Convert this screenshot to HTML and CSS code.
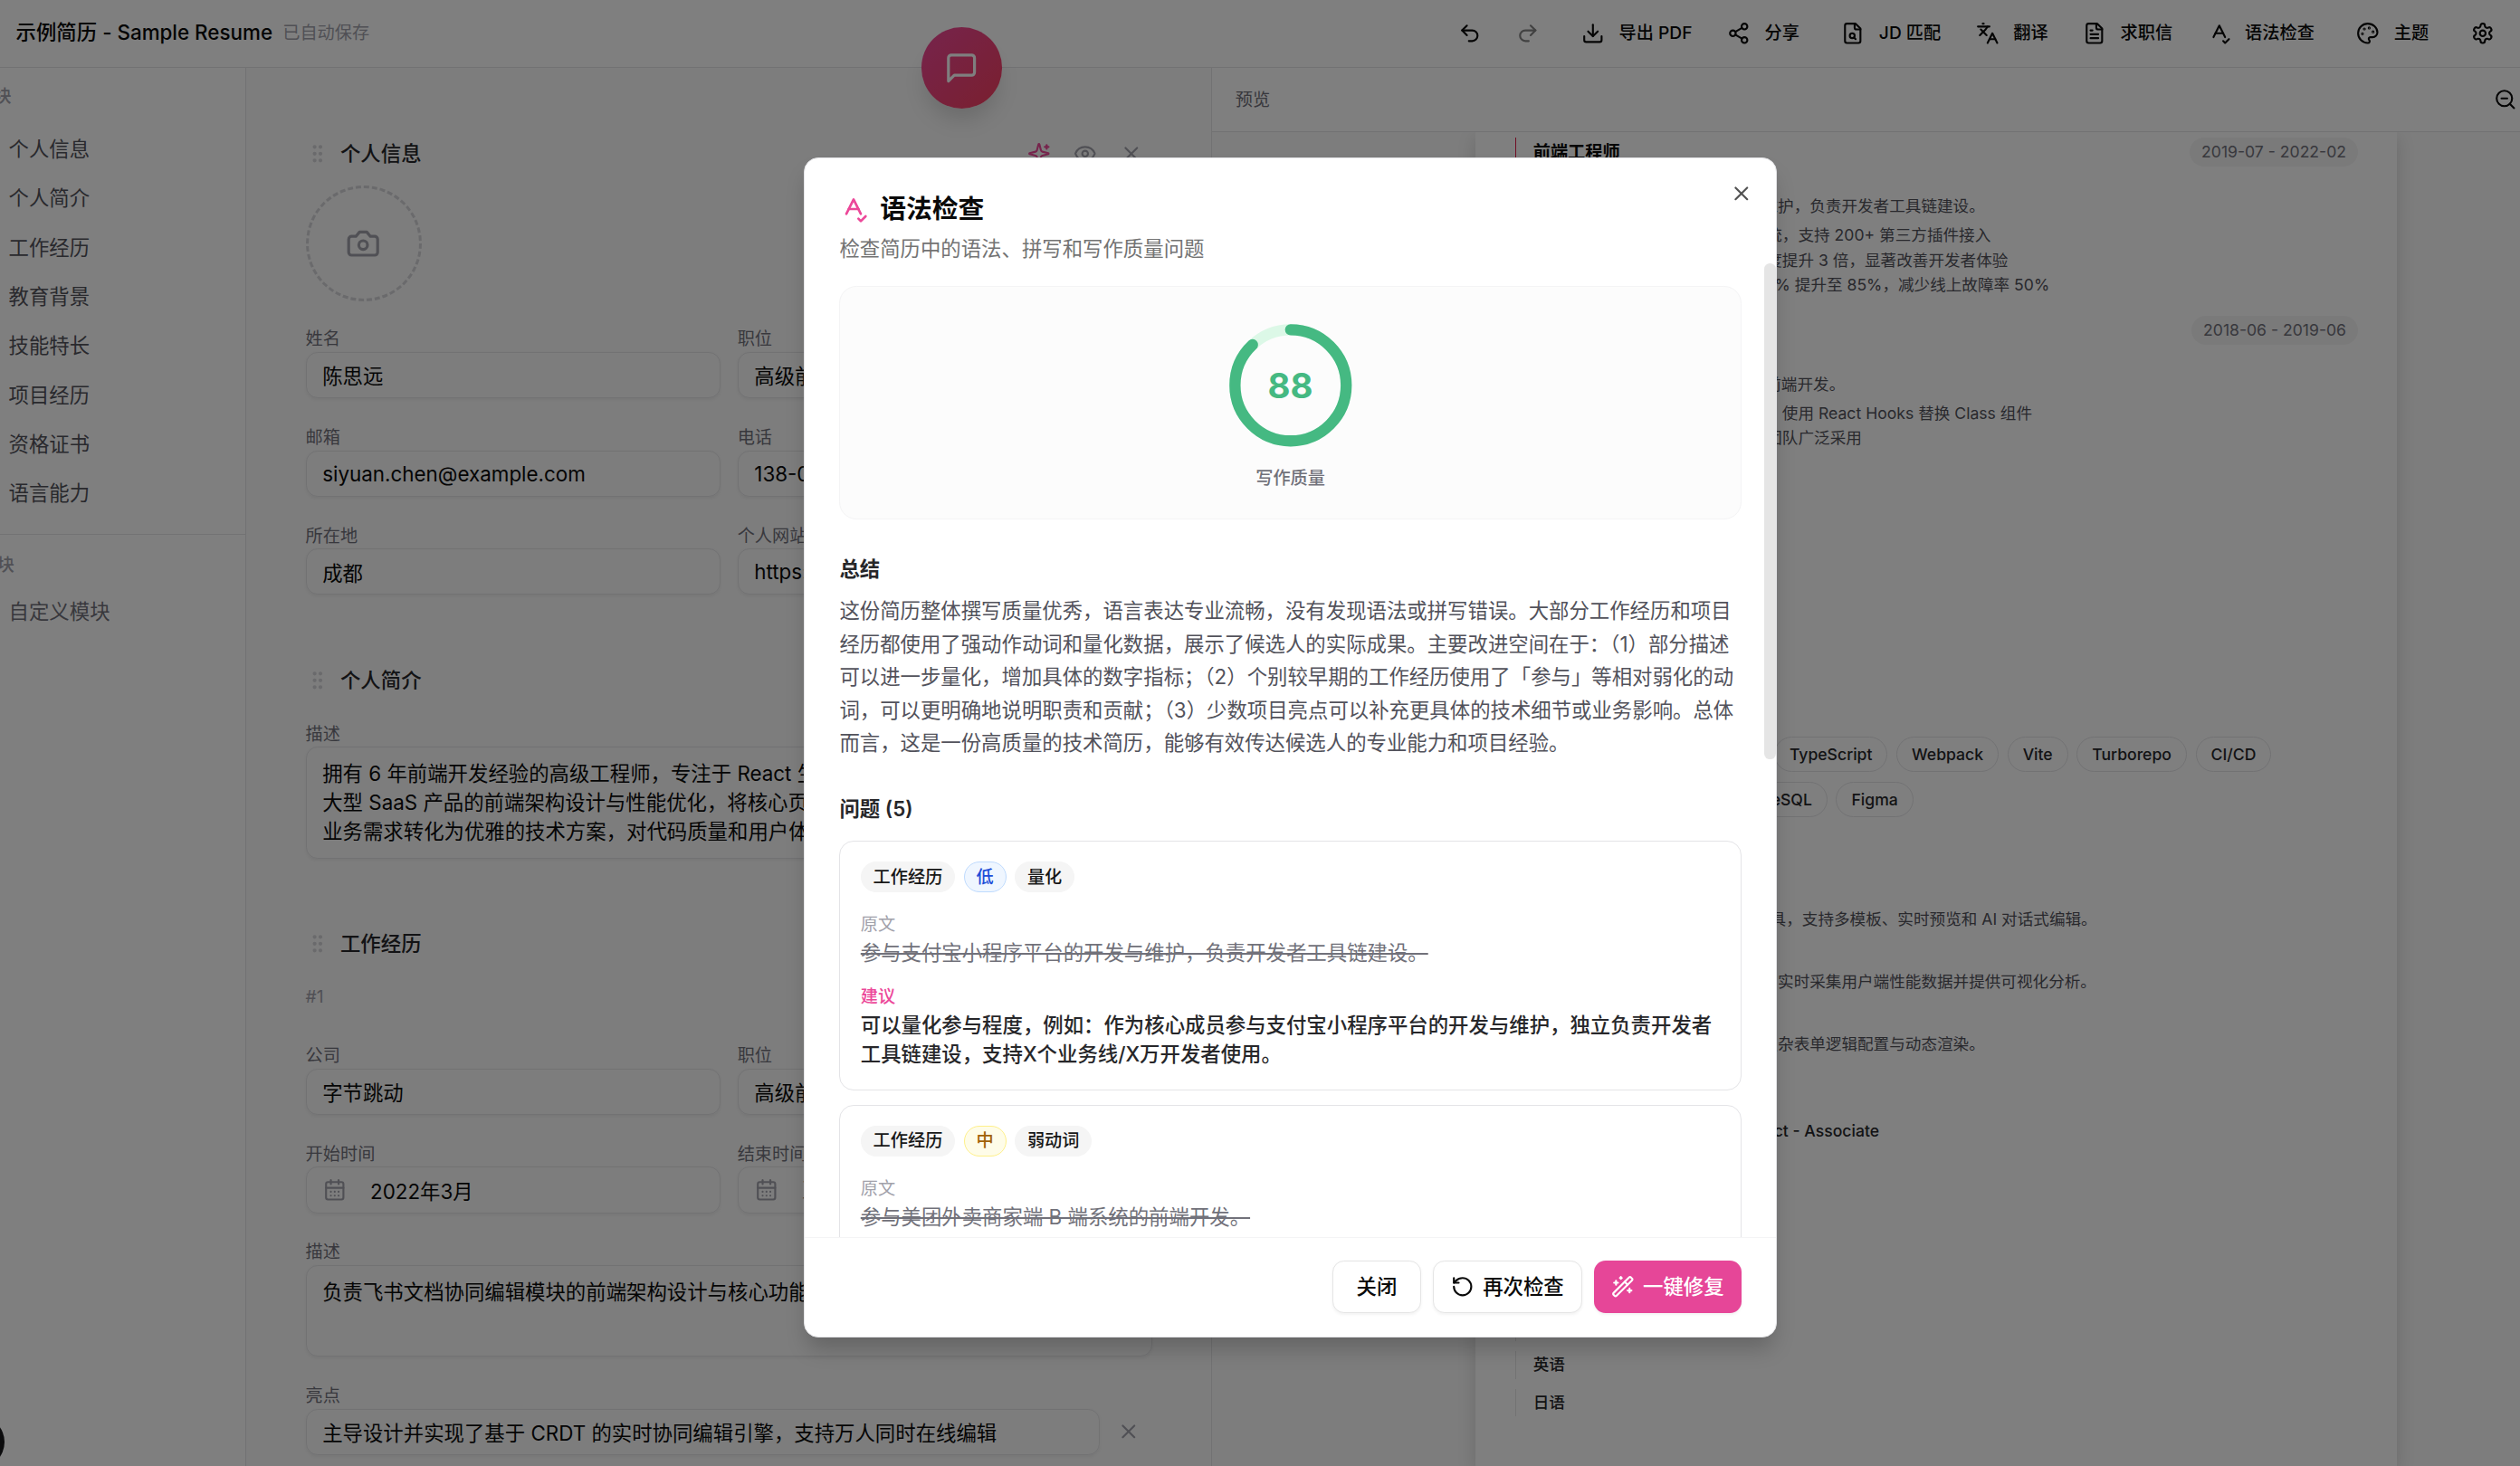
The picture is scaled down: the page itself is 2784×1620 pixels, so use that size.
FILE: index.html
```html
<!DOCTYPE html>
<html lang="zh-CN">
<head>
    <meta charset="UTF-8">
    <meta name="viewport" content="width=device-width, initial-scale=1.0">
    <title>示例简历 - Sample Resume</title>
    <link rel="stylesheet" href="styles.css">
</head>
<body>

    <!-- icon set -->
    <svg class="sprite" aria-hidden="true">
        <symbol id="i-undo" viewBox="0 0 24 24"><path d="M9 14 4 9l5-5"/><path d="M4 9h10.5a5.5 5.5 0 0 1 0 11H11"/></symbol>
        <symbol id="i-redo" viewBox="0 0 24 24"><path d="m15 14 5-5-5-5"/><path d="M20 9H9.5a5.5 5.5 0 0 0 0 11H13"/></symbol>
        <symbol id="i-download" viewBox="0 0 24 24"><path d="M12 15V3"/><path d="M21 15v4a2 2 0 0 1-2 2H5a2 2 0 0 1-2-2v-4"/><path d="m7 10 5 5 5-5"/></symbol>
        <symbol id="i-share" viewBox="0 0 24 24"><circle cx="18" cy="5" r="3"/><circle cx="6" cy="12" r="3"/><circle cx="18" cy="19" r="3"/><path d="m8.59 13.51 6.83 3.98"/><path d="m15.41 6.51-6.82 3.98"/></symbol>
        <symbol id="i-file-search" viewBox="0 0 24 24"><path d="M15 2H6a2 2 0 0 0-2 2v16a2 2 0 0 0 2 2h12a2 2 0 0 0 2-2V7Z"/><path d="M14 2v4a2 2 0 0 0 2 2h4"/><circle cx="11.5" cy="14.5" r="2.5"/><path d="M13.3 16.3 15 18"/></symbol>
        <symbol id="i-languages" viewBox="0 0 24 24"><path d="m5 8 6 6"/><path d="m4 14 6-6 2-3"/><path d="M2 5h12"/><path d="M7 2h1"/><path d="m22 22-5-10-5 10"/><path d="M14 18h6"/></symbol>
        <symbol id="i-file-text" viewBox="0 0 24 24"><path d="M15 2H6a2 2 0 0 0-2 2v16a2 2 0 0 0 2 2h12a2 2 0 0 0 2-2V7Z"/><path d="M14 2v4a2 2 0 0 0 2 2h4"/><path d="M10 9H8"/><path d="M16 13H8"/><path d="M16 17H8"/></symbol>
        <symbol id="i-spell" viewBox="0 0 24 24"><path d="m6 16 6-12 6 12"/><path d="M8 12h8"/><path d="m16 20 2 2 4-4"/></symbol>
        <symbol id="i-palette" viewBox="0 0 24 24"><path d="M12 22a1 1 0 0 1 0-20 10 9 0 0 1 10 9 5 5 0 0 1-5 5h-2.25a1.75 1.75 0 0 0-1.4 2.8l.3.4a1.75 1.75 0 0 1-1.4 2.8z"/><circle cx="13.5" cy="6.5" r=".5"/><circle cx="17.5" cy="10.5" r=".5"/><circle cx="6.5" cy="12.5" r=".5"/><circle cx="8.5" cy="7.5" r=".5"/></symbol>
        <symbol id="i-settings" viewBox="0 0 24 24"><path d="M12.22 2h-.44a2 2 0 0 0-2 2v.18a2 2 0 0 1-1 1.73l-.43.25a2 2 0 0 1-2 0l-.15-.08a2 2 0 0 0-2.73.73l-.22.38a2 2 0 0 0 .73 2.73l.15.1a2 2 0 0 1 1 1.72v.51a2 2 0 0 1-1 1.74l-.15.09a2 2 0 0 0-.73 2.73l.22.38a2 2 0 0 0 2.73.73l.15-.08a2 2 0 0 1 2 0l.43.25a2 2 0 0 1 1 1.73V20a2 2 0 0 0 2 2h.44a2 2 0 0 0 2-2v-.18a2 2 0 0 1 1-1.73l.43-.25a2 2 0 0 1 2 0l.15.08a2 2 0 0 0 2.73-.73l.22-.39a2 2 0 0 0-.73-2.73l-.15-.08a2 2 0 0 1-1-1.74v-.5a2 2 0 0 1 1-1.74l.15-.09a2 2 0 0 0 .73-2.73l-.22-.38a2 2 0 0 0-2.73-.73l-.15.08a2 2 0 0 1-2 0l-.43-.25a2 2 0 0 1-1-1.73V4a2 2 0 0 0-2-2z"/><circle cx="12" cy="12" r="3"/></symbol>
        <symbol id="i-zoom-out" viewBox="0 0 24 24"><circle cx="11" cy="11" r="8"/><path d="m21 21-4.35-4.35"/><path d="M8 11h6"/></symbol>
        <symbol id="i-x" viewBox="0 0 24 24"><path d="M18 6 6 18"/><path d="m6 6 12 12"/></symbol>
        <symbol id="i-eye" viewBox="0 0 24 24"><path d="M2.06 12.35a1 1 0 0 1 0-.7 10.75 10.75 0 0 1 19.88 0 1 1 0 0 1 0 .7 10.75 10.75 0 0 1-19.88 0"/><circle cx="12" cy="12" r="3"/></symbol>
        <symbol id="i-sparkles" viewBox="0 0 24 24"><path d="M9.94 15.5A2 2 0 0 0 8.5 14.06l-6.14-1.58a.5.5 0 0 1 0-.96L8.5 9.94A2 2 0 0 0 9.94 8.5l1.58-6.14a.5.5 0 0 1 .96 0l1.58 6.14a2 2 0 0 0 1.44 1.44l6.14 1.58a.5.5 0 0 1 0 .96l-6.14 1.58a2 2 0 0 0-1.44 1.44l-1.58 6.14a.5.5 0 0 1-.96 0z"/><path d="M20 3v4"/><path d="M22 5h-4"/><path d="M4 17v2"/><path d="M5 18H3"/></symbol>
        <symbol id="i-message" viewBox="0 0 24 24"><path d="M21 15a2 2 0 0 1-2 2H7l-4 4V5a2 2 0 0 1 2-2h14a2 2 0 0 1 2 2z"/></symbol>
        <symbol id="i-camera" viewBox="0 0 24 24"><path d="M14.5 4h-5L7 7H4a2 2 0 0 0-2 2v9a2 2 0 0 0 2 2h16a2 2 0 0 0 2-2V9a2 2 0 0 0-2-2h-3l-2.5-3z"/><circle cx="12" cy="13" r="3"/></symbol>
        <symbol id="i-grip" viewBox="0 0 24 24"><circle cx="9" cy="12" r="1"/><circle cx="9" cy="5" r="1"/><circle cx="9" cy="19" r="1"/><circle cx="15" cy="12" r="1"/><circle cx="15" cy="5" r="1"/><circle cx="15" cy="19" r="1"/></symbol>
        <symbol id="i-calendar" viewBox="0 0 24 24"><path d="M8 2v4"/><path d="M16 2v4"/><rect width="18" height="18" x="3" y="4" rx="2"/><path d="M3 10h18"/><path d="M8 14h.01M12 14h.01M16 14h.01M8 18h.01M12 18h.01M16 18h.01"/></symbol>
        <symbol id="i-rotate" viewBox="0 0 24 24"><path d="M3 12a9 9 0 1 0 9-9 9.75 9.75 0 0 0-6.74 2.74L3 8"/><path d="M3 3v5h5"/></symbol>
        <symbol id="i-wand" viewBox="0 0 24 24"><path d="m21.64 3.64-1.28-1.28a1.21 1.21 0 0 0-1.72 0L2.36 18.64a1.21 1.21 0 0 0 0 1.72l1.28 1.28a1.2 1.2 0 0 0 1.72 0L21.64 5.36a1.2 1.2 0 0 0 0-1.72"/><path d="m14 7 3 3"/><path d="M5 6v4"/><path d="M19 14v4"/><path d="M10 2v2"/><path d="M7 8H3"/><path d="M21 16h-4"/><path d="M11 3H9"/></symbol>
    </svg>

    <div class="app">
        <header class="topbar">
            <h1>示例简历 - Sample Resume</h1>
            <span class="saved">已自动保存</span>
            <div class="tools">
                <div class="group">
                    <button class="tool square" type="button" aria-label="撤销"><svg class="icon"><use href="#i-undo"/></svg></button>
                    <button class="tool square" type="button" aria-label="重做" disabled><svg class="icon"><use href="#i-redo"/></svg></button>
                </div>
                <div class="group">
                    <button class="tool" type="button"><svg class="icon"><use href="#i-download"/></svg>导出 PDF</button>
                    <button class="tool" type="button"><svg class="icon"><use href="#i-share"/></svg>分享</button>
                </div>
                <div class="group">
                    <button class="tool" type="button"><svg class="icon"><use href="#i-file-search"/></svg>JD 匹配</button>
                    <button class="tool" type="button"><svg class="icon"><use href="#i-languages"/></svg>翻译</button>
                    <button class="tool" type="button"><svg class="icon"><use href="#i-file-text"/></svg>求职信</button>
                    <button class="tool" type="button"><svg class="icon"><use href="#i-spell"/></svg>语法检查</button>
                </div>
                <button class="tool" type="button"><svg class="icon"><use href="#i-palette"/></svg>主题</button>
                <button class="tool square" type="button" aria-label="设置"><svg class="icon"><use href="#i-settings"/></svg></button>
            </div>
        </header>

        <div class="workspace">
            <nav class="sidebar">
                <h2>块</h2>
                <ul>
                    <li><a href="#personal">个人信息</a></li>
                    <li><a href="#summary">个人简介</a></li>
                    <li><a href="#work">工作经历</a></li>
                    <li><a href="#education">教育背景</a></li>
                    <li><a href="#skills">技能特长</a></li>
                    <li><a href="#projects">项目经历</a></li>
                    <li><a href="#certs">资格证书</a></li>
                    <li><a href="#languages">语言能力</a></li>
                </ul>
                <div class="add-block">
                    <h2>块</h2>
                    <button type="button">自定义模块</button>
                </div>
            </nav>

            <main class="editor">
                <section id="personal">
                    <div class="section-head compact">
                        <svg class="icon grip"><use href="#i-grip"/></svg>
                        <h3>个人信息</h3>
                        <button class="mini pink" type="button" aria-label="AI 优化"><svg class="icon"><use href="#i-sparkles"/></svg></button>
                        <button class="mini" type="button" aria-label="隐藏"><svg class="icon"><use href="#i-eye"/></svg></button>
                        <button class="mini" type="button" aria-label="删除"><svg class="icon"><use href="#i-x"/></svg></button>
                    </div>
                    <button class="avatar" type="button" aria-label="上传头像"><svg><use href="#i-camera"/></svg></button>
                    <div class="fields">
                        <div class="field"><label for="name">姓名</label><input id="name" type="text" value="陈思远"></div>
                        <div class="field"><label for="title">职位</label><input id="title" type="text" value="高级前端工程师"></div>
                        <div class="field"><label for="email">邮箱</label><input id="email" type="text" value="siyuan.chen@example.com"></div>
                        <div class="field"><label for="phone">电话</label><input id="phone" type="text" value="138-0000-0000"></div>
                        <div class="field"><label for="city">所在地</label><input id="city" type="text" value="成都"></div>
                        <div class="field"><label for="site">个人网站</label><input id="site" type="text" value="https://example.com"></div>
                    </div>
                </section>

                <section id="summary">
                    <div class="section-head">
                        <svg class="icon grip"><use href="#i-grip"/></svg>
                        <h3>个人简介</h3>
                    </div>
                    <div class="field">
                        <label for="about">描述</label>
                        <textarea id="about" class="tall">拥有 6 年前端开发经验的高级工程师，专注于 React 生态与工程化建设。主导过
大型 SaaS 产品的前端架构设计与性能优化，将核心页面加载速度提升。善于将
业务需求转化为优雅的技术方案，对代码质量和用户体验有着极高的追求。</textarea>
                    </div>
                </section>

                <section id="work">
                    <div class="section-head">
                        <svg class="icon grip"><use href="#i-grip"/></svg>
                        <h3>工作经历</h3>
                    </div>
                    <p class="entry-no">#1</p>
                    <div class="fields">
                        <div class="field"><label for="company">公司</label><input id="company" type="text" value="字节跳动"></div>
                        <div class="field"><label for="position">职位</label><input id="position" type="text" value="高级前端工程师"></div>
                        <div class="field">
                            <label for="start">开始时间</label>
                            <div class="date"><svg class="icon"><use href="#i-calendar"/></svg><input id="start" type="text" value="2022年3月"></div>
                        </div>
                        <div class="field">
                            <label for="end">结束时间</label>
                            <div class="date"><svg class="icon"><use href="#i-calendar"/></svg><input id="end" type="text" placeholder="至今"></div>
                        </div>
                        <div class="field wide"><label for="duty">描述</label><textarea id="duty">负责飞书文档协同编辑模块的前端架构设计与核心功能开发。</textarea></div>
                        <div class="field wide">
                            <label for="highlight">亮点</label>
                            <div class="removable">
                                <input id="highlight" type="text" value="主导设计并实现了基于 CRDT 的实时协同编辑引擎，支持万人同时在线编辑">
                                <button class="remove" type="button" aria-label="删除亮点"><svg class="icon"><use href="#i-x"/></svg></button>
                            </div>
                        </div>
                    </div>
                </section>
            </main>

            <aside class="preview">
                <div class="preview-bar">
                    <span>预览</span>
                    <button type="button" aria-label="缩小"><svg class="icon"><use href="#i-zoom-out"/></svg></button>
                </div>
                <div class="canvas">
                    <article class="paper">
                        <div class="entry current">
                            <div class="entry-row"><h4>前端工程师</h4><span class="period">2019-07 - 2022-02</span></div>
                            <p class="org">蚂蚁集团</p>
                            <p>参与支付宝小程序平台的开发与维护，负责开发者工具链建设。</p>
                            <ul>
                                <li>主导设计小程序插件化架构系统，支持 200+ 第三方插件接入</li>
                                <li>重构包体构建流程，使编译速度提升 3 倍，显著改善开发者体验</li>
                                <li>推动核心单元测试覆盖率从 30% 提升至 85%，减少线上故障率 50%</li>
                            </ul>
                        </div>
                        <div class="entry">
                            <div class="entry-row"><h4>前端工程师</h4><span class="period">2018-06 - 2019-06</span></div>
                            <p class="org">美团</p>
                            <p>参与美团外卖商家端 B 端系统的前端开发。</p>
                            <ul>
                                <li>完成商家后台核心页面的重构，使用 React Hooks 替换 Class 组件</li>
                                <li>封装通用组件库，被多个业务团队广泛采用</li>
                            </ul>
                        </div>

                        <h5>教育背景</h5>
                        <div class="list">
                            <div class="entry"><h4>硕士</h4><p>计算机科学与技术</p><p>GPA 3.8</p></div>
                            <div class="entry"><h4>学士</h4><p>软件工程</p><p>GPA 3.7</p></div>
                        </div>

                        <h5>技能特长</h5>
                        <div class="chips">
                            <span>React</span><span>Next.js</span><span>Vue 3</span><span>TypeScript</span><span>Webpack</span><span>Vite</span><span>Turborepo</span><span>CI/CD</span>
                        </div>
                        <div class="chips">
                            <span>Node.js</span><span>Docker</span><span>PostgreSQL</span><span>Figma</span>
                        </div>

                        <h5>项目经历</h5>
                        <div class="list">
                            <div class="entry"><h4>AI 简历</h4><p>面向求职者的在线 AI 简历编辑工具，支持多模板、实时预览和 AI 对话式编辑。</p></div>
                            <div class="entry"><h4>性能监控</h4><p>轻量级的前端性能监控平台产品，实时采集用户端性能数据并提供可视化分析。</p></div>
                            <div class="entry"><h4>表单引擎</h4><p>可视化拖拽表单搭建引擎，支持复杂表单逻辑配置与动态渲染。</p></div>
                        </div>

                        <h5>资格证书</h5>
                        <div class="list certs">
                            <div class="entry"><h4>AWS Certified Solutions Architect - Associate</h4><p>AWS</p></div>
                            <div class="entry"><h4>CKA</h4><p>CNCF</p></div>
                        </div>

                        <h5>语言能力</h5>
                        <div class="list langs">
                            <div class="entry">中文</div>
                            <div class="entry">英语</div>
                            <div class="entry">日语</div>
                        </div>
                    </article>
                </div>
            </aside>
        </div>

        <button class="chat-fab" type="button" aria-label="AI 对话"><svg><use href="#i-message"/></svg></button>
        <span class="dev-badge"></span>
    </div>

    <div class="overlay">
        <div class="modal" role="dialog" aria-labelledby="dialogTitle">
            <div class="modal-head">
                <h2 id="dialogTitle"><svg><use href="#i-spell"/></svg>语法检查</h2>
                <p>检查简历中的语法、拼写和写作质量问题</p>
            </div>
            <button class="close" type="button" aria-label="关闭"><svg class="icon"><use href="#i-x"/></svg></button>

            <div class="modal-body">
                <div class="score-card">
                    <div class="ring">
                        <svg viewBox="0 0 100 100">
                            <circle class="track" cx="50" cy="50" r="40"/>
                            <circle class="value" cx="50" cy="50" r="40" pathLength="100" stroke-dasharray="88 100"/>
                        </svg>
                        <strong>88</strong>
                    </div>
                    <p>写作质量</p>
                </div>

                <h3>总结</h3>
                <p class="summary">这份简历整体撰写质量优秀，语言表达专业流畅，没有发现语法或拼写错误。大部分工作经历和项目经历都使用了强动作动词和量化数据，展示了候选人的实际成果。主要改进空间在于：（1）部分描述可以进一步量化，增加具体的数字指标；（2）个别较早期的工作经历使用了「参与」等相对弱化的动词，可以更明确地说明职责和贡献；（3）少数项目亮点可以补充更具体的技术细节或业务影响。总体而言，这是一份高质量的技术简历，能够有效传达候选人的专业能力和项目经验。</p>

                <h3 class="issues-title">问题 (5)</h3>
                <div class="issue">
                    <div class="tags"><span class="tag">工作经历</span><span class="tag low">低</span><span class="tag">量化</span></div>
                    <p class="caption">原文</p>
                    <p class="original">参与支付宝小程序平台的开发与维护，负责开发者工具链建设。</p>
                    <p class="caption advice">建议</p>
                    <p class="suggestion">可以量化参与程度，例如：作为核心成员参与支付宝小程序平台的开发与维护，独立负责开发者工具链建设，支持X个业务线/X万开发者使用。</p>
                </div>
                <div class="issue">
                    <div class="tags"><span class="tag">工作经历</span><span class="tag mid">中</span><span class="tag">弱动词</span></div>
                    <p class="caption">原文</p>
                    <p class="original">参与美团外卖商家端 B 端系统的前端开发。</p>
                </div>
                <span class="scroll-thumb"></span>
            </div>

            <div class="modal-foot">
                <button class="btn" type="button">关闭</button>
                <button class="btn with-icon" type="button"><svg class="icon"><use href="#i-rotate"/></svg>再次检查</button>
                <button class="btn with-icon primary" type="button"><svg class="icon"><use href="#i-wand"/></svg>一键修复</button>
            </div>
        </div>
    </div>

</body>
</html>
```
FILE: styles.css
```css
* {
    box-sizing: border-box;
    margin: 0;
    padding: 0;
}
html {
    height: 100%;
    zoom: 1.6;
}
body {
    height: 100%;
    overflow: hidden;
    font-family: Inter, "Noto Sans CJK SC", sans-serif;
    font-size: 14px;
    line-height: 20px;
    color: #0a0a0a;
    background: #fff;
}
button, input, textarea {
    font: inherit;
    color: inherit;
}
button {
    background: none;
    border: none;
    cursor: pointer;
}
ul {
    list-style: none;
}
a {
    color: inherit;
    text-decoration: none;
}
svg {
    fill: none;
    stroke: currentColor;
    stroke-width: 2;
    stroke-linecap: round;
    stroke-linejoin: round;
    flex-shrink: 0;
}
.sprite {
    position: absolute;
    width: 0;
    height: 0;
}
.icon {
    width: 16px;
    height: 16px;
}

/* top bar */
.app {
    position: relative;
    height: 100%;
    display: flex;
    flex-direction: column;
    overflow: hidden;
}
.topbar {
    display: flex;
    align-items: center;
    height: 47px;
    padding: 0 8px 1px 11px;
    border-bottom: 1px solid #e4e4e7;
    flex-shrink: 0;
}
.topbar h1 {
    font-size: 14px;
    font-weight: 500;
}
.saved {
    margin-left: 7px;
    font-size: 12px;
    color: #a1a1aa;
}
.tools {
    display: flex;
    gap: 9px;
    margin-left: auto;
}
.group {
    display: flex;
    gap: 4px;
}
.tool {
    display: flex;
    align-items: center;
    justify-content: center;
    gap: 10px;
    height: 32px;
    padding: 0 10px;
    font-size: 12px;
    font-weight: 500;
    white-space: nowrap;
}
.tool.square {
    width: 36px;
}
.tool:disabled {
    opacity: 0.5;
}

.workspace {
    flex: 1;
    display: flex;
    min-height: 0;
}

/* module list */
.sidebar {
    width: 170px;
    padding-top: 12px;
    border-right: 1px solid #e4e4e7;
    flex-shrink: 0;
    overflow: hidden;
}
.sidebar h2 {
    margin-left: -4px;
    font-size: 12px;
    font-weight: 500;
    line-height: 16px;
    color: #a1a1aa;
}
.sidebar ul {
    display: grid;
    gap: 2px;
    margin: 12px 0;
}
.sidebar li a {
    display: block;
    padding: 6px;
    color: #52525b;
}
.add-block {
    padding-top: 13px;
    border-top: 1px solid #e4e4e7;
}
.add-block h2 {
    margin-left: -2px;
}
.add-block button {
    margin-top: 8px;
    padding: 6px;
    color: #71717a;
}

/* editor */
.editor {
    width: 667px;
    padding: 45px 41px 0 41px;
    background: #fafafa;
    border-right: 1px solid #e4e4e7;
    flex-shrink: 0;
    overflow: hidden;
}
.editor section + section {
    margin-top: 45px;
}
.section-head {
    display: flex;
    align-items: center;
    gap: 4px;
    height: 28px;
    margin-bottom: 12px;
}
.section-head.compact {
    margin-bottom: 8px;
}
.section-head h3 {
    flex: 1;
    margin-left: 4px;
    font-size: 14px;
    font-weight: 500;
    color: #27272a;
}
.grip {
    color: #d4d4d8;
}
.mini {
    display: grid;
    place-items: center;
    width: 28px;
    height: 28px;
    color: #a1a1aa;
}
.mini.pink {
    color: #ec4899;
}
.avatar {
    display: grid;
    place-items: center;
    width: 80px;
    height: 80px;
    margin-bottom: 15px;
    border: 2px dashed #d4d4d8;
    border-radius: 50%;
    color: #a1a1aa;
}
.avatar svg, .chat-fab svg {
    width: 24px;
    height: 24px;
}
.fields {
    display: grid;
    grid-template-columns: 1fr 1fr;
    gap: 16px 12px;
}
.wide {
    grid-column: 1 / -1;
}
.field label {
    display: block;
    padding-top: 2px;
    font-size: 12px;
    line-height: 18px;
    color: #71717a;
}
.field input, .field textarea {
    display: block;
    width: 100%;
    height: 32px;
    padding: 0 11px;
    border: 1px solid #e4e4e7;
    border-radius: 8px;
    background: transparent;
    box-shadow: 0 1px 2px rgba(0, 0, 0, 0.05);
    outline: none;
}
.field textarea {
    height: 63px;
    padding: 8px 11px;
    resize: none;
    overflow: hidden;
}
.field textarea.tall {
    height: 77px;
}
.entry-no {
    margin-bottom: 20px;
    font-size: 12px;
    color: #a1a1aa;
}
.date {
    position: relative;
}
.date .icon {
    position: absolute;
    top: 8px;
    left: 12px;
    color: #a1a1aa;
}
.field .date input {
    padding-left: 44px;
}
.removable {
    display: flex;
    gap: 4px;
}
.remove {
    display: grid;
    place-items: center;
    width: 32px;
    height: 32px;
    color: #a1a1aa;
    flex-shrink: 0;
}

/* preview */
.preview {
    flex: 1;
    display: flex;
    flex-direction: column;
    min-width: 0;
}
.preview-bar {
    display: flex;
    align-items: center;
    justify-content: space-between;
    height: 44px;
    padding: 0 2px 0 16px;
    border-bottom: 1px solid #e4e4e7;
    font-size: 12px;
    color: #71717a;
    flex-shrink: 0;
}
.preview-bar button {
    display: grid;
    color: #0a0a0a;
}
.canvas {
    flex: 1;
    padding: 0 85px 0 182px;
    background: #fafafa;
    overflow: hidden;
}
.paper {
    height: 100%;
    padding: 4px 27px 0 27px;
    background: #fff;
    box-shadow: 0 4px 12px rgba(0, 0, 0, 0.15);
    font-size: 11px;
    line-height: 17px;
    color: #52525b;
}
.entry {
    padding-left: 12px;
    border-left: 1px solid #e4e4e7;
}
.entry.current {
    margin-bottom: 13px;
    border-color: #e11d48;
}
.entry-row {
    display: flex;
    justify-content: space-between;
    align-items: center;
    height: 20px;
}
.entry h4 {
    font-size: 11px;
    font-weight: 500;
    line-height: 20px;
    color: #27272a;
}
.entry-row h4 {
    font-size: 12px;
    font-weight: 700;
    color: #0a0a0a;
}
.period {
    padding: 0 8px;
    border-radius: 10px;
    background: #f4f4f5;
    font-size: 11px;
    line-height: 20px;
    color: #71717a;
}
.entry p {
    padding-left: 4px;
}
.org {
    margin-bottom: 2px;
}
.entry ul {
    margin-top: 3px;
    padding-left: 18px;
    list-style: disc;
}
.paper h5 {
    margin: 18px 0 8px;
    font-size: 12px;
    line-height: 16px;
    color: #27272a;
}
.list {
    display: grid;
    gap: 6px;
}
.certs {
    gap: 20px;
}
.chips {
    display: flex;
    gap: 6px;
    margin-bottom: 7px;
}
.chips span {
    padding: 3px 10px;
    border: 1px solid #e4e4e7;
    border-radius: 13px;
    font-weight: 500;
    color: #27272a;
}
.langs {
    gap: 7px;
}
.langs .entry {
    line-height: 19px;
    font-weight: 500;
    color: #27272a;
}

/* floating items */
.chat-fab {
    position: absolute;
    top: 19px;
    left: 636px;
    display: grid;
    place-items: center;
    width: 56px;
    height: 56px;
    border-radius: 50%;
    background: linear-gradient(135deg, #ec4899, #f43f5e);
    box-shadow: 0 10px 15px -3px rgba(0, 0, 0, 0.15);
    color: #fff;
}
.dev-badge {
    position: absolute;
    left: -33px;
    top: 978px;
    width: 36px;
    height: 36px;
    border-radius: 50%;
    background: #18181b;
}

/* grammar dialog */
.overlay {
    position: absolute;
    inset: 0;
    background: rgba(0, 0, 0, 0.5);
}
.modal {
    position: absolute;
    top: 109px;
    left: 555px;
    bottom: 89px;
    display: flex;
    flex-direction: column;
    width: 672px;
    background: #fff;
    border: 1px solid #e4e4e7;
    border-radius: 10px;
    box-shadow: 0 10px 15px -3px rgba(0, 0, 0, 0.2);
    overflow: hidden;
}
.modal-head {
    padding: 24px 24px 0;
}
.modal-head h2 {
    display: flex;
    align-items: center;
    gap: 8px;
    height: 21px;
    font-size: 18px;
    font-weight: 600;
}
.modal-head svg {
    width: 20px;
    height: 20px;
    color: #ec4899;
}
.modal-head p {
    margin-top: 7px;
    color: #737373;
}
.close {
    position: absolute;
    top: 16px;
    right: 16px;
    display: grid;
    opacity: 0.7;
}
.modal-body {
    position: relative;
    flex: 1;
    min-height: 0;
    padding: 16px 24px 0;
    overflow: hidden;
}
.score-card {
    display: flex;
    flex-direction: column;
    align-items: center;
    gap: 8px;
    padding: 20px;
    margin-bottom: 24px;
    border: 1px solid #f4f4f5;
    border-radius: 12px;
    background: #fcfcfc;
}
.ring {
    display: grid;
    place-items: center;
    width: 96px;
    height: 96px;
}
.ring > * {
    grid-area: 1 / 1;
}
.ring svg {
    width: 96px;
    height: 96px;
    stroke-width: 8;
    transform: rotate(-90deg);
}
.track {
    stroke: #dcf8e7;
}
.value {
    stroke: #45b982;
}
.ring strong {
    font-size: 24px;
    font-weight: 700;
    color: #45b982;
}
.score-card p {
    font-size: 12px;
    font-weight: 500;
    line-height: 16px;
    color: #71717a;
}
.modal-body h3 {
    margin-bottom: 8px;
    font-size: 14px;
    font-weight: 600;
    color: #27272a;
}
.summary {
    margin-bottom: 24px;
    line-height: 1.625;
    color: #52525b;
}
.modal-body .issues-title {
    margin-bottom: 12px;
}
.issue {
    padding: 14px;
    margin-bottom: 10px;
    border: 1px solid #e4e4e7;
    border-radius: 10px;
}
.tags {
    display: flex;
    gap: 6px;
    margin-bottom: 14px;
}
.tag {
    padding: 2px 8px;
    border: 1px solid #f5f5f5;
    border-radius: 11px;
    background: #f5f5f5;
    font-size: 12px;
    font-weight: 500;
    line-height: 16px;
    color: #171717;
}
.tag.low {
    border-color: #bfdbfe;
    background: #eff6ff;
    color: #1d4ed8;
}
.tag.mid {
    border-color: #fef08a;
    background: #fefce8;
    color: #a16207;
}
.caption {
    margin-bottom: 2px;
    font-size: 12px;
    line-height: 16px;
    color: #a1a1aa;
}
.original {
    color: #71717a;
    text-decoration: line-through;
}
.caption.advice {
    margin-top: 12px;
    font-weight: 500;
    color: #ec4899;
}
.suggestion {
    font-weight: 500;
    color: #27272a;
}
.scroll-thumb {
    position: absolute;
    top: 0;
    right: 0;
    width: 8px;
    height: 343px;
    border-radius: 4px;
    background: #e5e5e5;
}
.modal-foot {
    display: flex;
    justify-content: flex-end;
    gap: 8px;
    padding: 16px 24px;
    border-top: 1px solid #f4f4f5;
}
.btn {
    display: flex;
    align-items: center;
    gap: 6px;
    height: 36px;
    padding: 0 16px;
    border: 1px solid #e5e5e5;
    border-radius: 8px;
    background: #fff;
    box-shadow: 0 1px 2px rgba(0, 0, 0, 0.05);
    font-weight: 500;
}
.btn.with-icon {
    padding: 0 12px;
}
.btn.primary {
    border: none;
    background: #e64698;
    color: #fff;
}
```
